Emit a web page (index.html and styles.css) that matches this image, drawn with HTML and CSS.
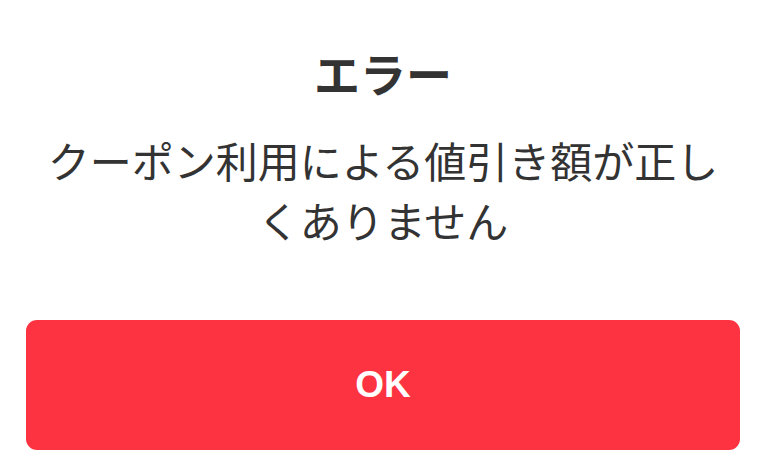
FILE: index.html
```html
<!DOCTYPE html>
<html lang="ja">
<head>
<meta charset="utf-8">
<link rel="stylesheet" href="styles.css">
</head>
<body>
<div class="dialog">
  <h1 class="title">エラー</h1>
  <p class="message">クーポン利用による値引き額が正しくありません</p>
  <button class="ok">OK</button>
</div>
</body>
</html>
```
FILE: styles.css
```css
html, body {
  margin: 0;
  padding: 0;
  background: #ffffff;
}
.dialog {
  width: 765px;
  height: 465px;
  box-sizing: border-box;
  padding: 42px 25px 0 26px;
  display: flex;
  flex-direction: column;
  align-items: stretch;
  font-family: "Noto Sans CJK JP", "Noto Sans", sans-serif;
  color: #333333;
}
.title {
  margin: 0;
  font-size: 46px;
  line-height: 60px;
  font-weight: 700;
  text-align: center;
}
.message {
  margin: 28px 10px 0;
  font-size: 42px;
  line-height: 60px;
  font-weight: 400;
  text-align: center;
}
.ok {
  margin-top: 70px;
  height: 130px;
  border: none;
  border-radius: 11px;
  background: #fe3341;
  color: #ffffff;
  font-family: "Liberation Sans", Arial, sans-serif;
  font-weight: 700;
  font-size: 37px;
  padding: 0;
}
```
